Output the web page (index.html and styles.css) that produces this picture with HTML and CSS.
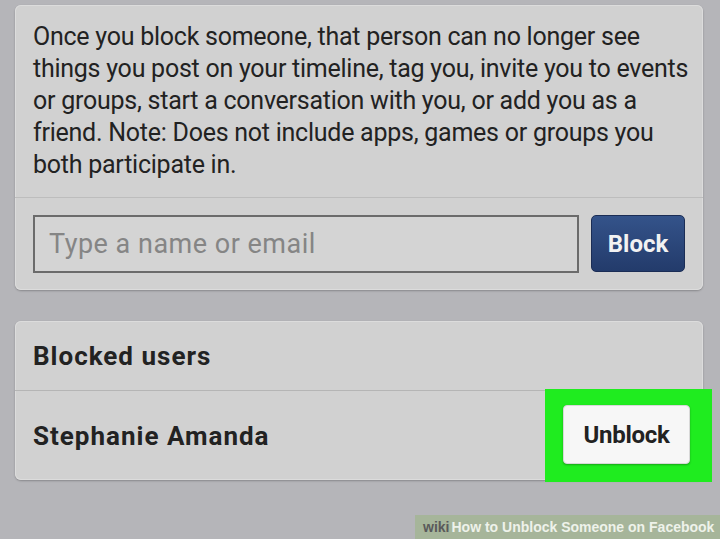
FILE: index.html
```html
<!DOCTYPE html>
<html lang="en">
<head>
    <meta charset="UTF-8">
    <meta name="viewport" content="width=device-width, initial-scale=1.0">
    <title>Blocking</title>
    <link rel="stylesheet" href="styles.css">
</head>
<body>
    <div class="card">
        <p class="explicacao">
            Once you block someone, that person can no longer see<br>
            things you post on your timeline, tag you, invite you to events<br>
            or groups, start a conversation with you, or add you as a<br>
            friend. Note: Does not include apps, games or groups you<br>
            both participate in.
        </p>
        <div class="block-form">
            <input type="text" class="campo-nome" placeholder="Type a name or email">
            <button class="botao-block">Block</button>
        </div>
    </div>

    <div class="card">
        <div class="linha titulo">Blocked users</div>
        <div class="linha usuario">
            <span>Stephanie Amanda</span>
            <div class="destaque">
                <button class="botao-unblock">Unblock</button>
            </div>
        </div>
    </div>

    <div class="marca">
        <b class="wiki">wiki</b><b class="how">How</b> to Unblock Someone on Facebook
    </div>
</body>
</html>
```

FILE: styles.css
```css
body {
    margin: 0;
    padding: 5px 17px 0 15px;
    min-height: 539px;
    box-sizing: border-box;
    position: relative;
    background-color: #b5b5b9;
    font-family: Roboto, "Liberation Sans", sans-serif;
    color: #222;
}

.card {
    background-color: #d1d1d1;
    border-radius: 6px;
    box-shadow: 0 1px 2px rgba(0, 0, 0, 0.25), inset 0 0 0 1px #dcdcdc;
    margin-bottom: 31px;
}

.explicacao {
    margin: 0;
    padding: 16px 12px 16px 18px;
    font-size: 25px;
    line-height: 32px;
    letter-spacing: -0.25px;
    white-space: nowrap;
    color: #222;
    border-bottom: 1px solid #bdbdbd;
}

.block-form {
    display: flex;
    gap: 12px;
    padding: 17px 18px 17px 18px;
}

.campo-nome {
    flex: 1;
    height: 58px;
    box-sizing: border-box;
    border: 2px solid #6b6b6b;
    background-color: #d4d4d4;
    padding: 0 14px;
    font-family: Roboto, "Liberation Sans", sans-serif;
    font-size: 27px;
    letter-spacing: 0.5px;
    color: #333;
    outline: none;
}

.campo-nome::placeholder {
    color: #858585;
}

.botao-block {
    width: 94px;
    height: 57px;
    border: 1px solid #1b2d55;
    border-radius: 5px;
    background: linear-gradient(#34538a, #233b6b);
    color: #f2f2f2;
    font-family: Roboto, "Liberation Sans", sans-serif;
    font-weight: bold;
    font-size: 24px;
}

.linha {
    display: flex;
    align-items: center;
    padding: 0 18px;
    font-weight: bold;
    font-size: 26px;
    letter-spacing: 1px;
}

.titulo {
    height: 69px;
    border-bottom: 1px solid #b5b5b5;
}

.usuario {
    height: 89px;
    position: relative;
}

.destaque {
    position: absolute;
    top: -2px;
    right: -9px;
    width: 167px;
    height: 93px;
    box-sizing: border-box;
    padding: 16px 22px 18px 18px;
    background-color: #1fec1f;
}

.botao-unblock {
    width: 100%;
    height: 100%;
    border: 1px solid #d8d8d8;
    border-radius: 4px;
    background-color: #f7f7f7;
    box-shadow: 0 1px 2px rgba(0, 0, 0, 0.3);
    color: #222;
    font-family: Roboto, "Liberation Sans", sans-serif;
    font-weight: bold;
    font-size: 24px;
    letter-spacing: -0.3px;
}

.marca {
    position: absolute;
    right: 0;
    bottom: 0;
    width: 305px;
    height: 24px;
    line-height: 24px;
    padding-left: 8px;
    box-sizing: border-box;
    background-color: #a6b59a;
    color: #eef2ea;
    font-family: "Liberation Sans", sans-serif;
    font-size: 14px;
    font-weight: bold;
    white-space: nowrap;
}

.wiki {
    color: #5a5a5a;
    margin-right: 2px;
}
```
